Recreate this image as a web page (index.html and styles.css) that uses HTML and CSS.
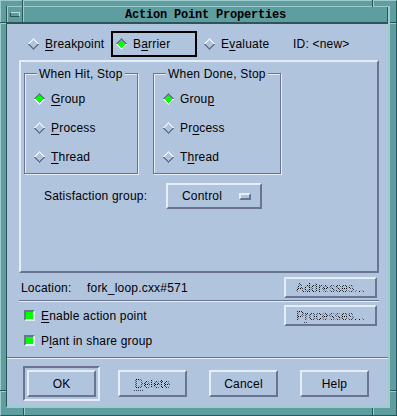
FILE: index.html
```html
<!DOCTYPE html>
<html lang="en">
<head>
    <meta charset="UTF-8">
    <title>Action Point Properties</title>
    <link rel="stylesheet" href="styles.css">
</head>
<body>
    <div class="window">
        <!-- resize handle marks on the frame -->
        <span class="mark v tl"></span>
        <span class="mark v tr"></span>
        <span class="mark h lt"></span>
        <span class="mark h rt"></span>
        <span class="mark h lb"></span>
        <span class="mark h rb"></span>
        <span class="mark v bl"></span>
        <span class="mark v br"></span>

        <div class="frame">
            <div class="titlebar">
                <div class="menu-btn"><span class="menu-glyph"></span></div>
                <div class="title">Action Point Properties</div>
            </div>

            <div class="content">
                <div class="type-row">
                    <div class="toggle">
                        <svg class="radio" viewBox="0 0 12 12" shape-rendering="crispEdges"><polygon class="hi" points="0,6 6,0 12,6 10,6 6,2 2,6"/><polygon class="lo" points="0,6 6,12 12,6 10,6 6,10 2,6"/><polygon class="dot" points="2,6 6,2 10,6 6,10"/></svg>
                        <span><u>B</u>reakpoint</span>
                    </div>
                    <div class="toggle focus">
                        <svg class="radio on" viewBox="0 0 12 12" shape-rendering="crispEdges"><polygon class="hi" points="0,6 6,0 12,6 10,6 6,2 2,6"/><polygon class="lo" points="0,6 6,12 12,6 10,6 6,10 2,6"/><polygon class="dot" points="2,6 6,2 10,6 6,10"/></svg>
                        <span>B<u>a</u>rrier</span>
                    </div>
                    <div class="toggle">
                        <svg class="radio" viewBox="0 0 12 12" shape-rendering="crispEdges"><polygon class="hi" points="0,6 6,0 12,6 10,6 6,2 2,6"/><polygon class="lo" points="0,6 6,12 12,6 10,6 6,10 2,6"/><polygon class="dot" points="2,6 6,2 10,6 6,10"/></svg>
                        <span>E<u>v</u>aluate</span>
                    </div>
                    <span class="id">ID: &lt;new&gt;</span>
                </div>

                <div class="main-frame">
                    <div class="stop-row">
                        <div class="group hit">
                            <span class="group-title">When Hit, Stop</span>
                            <div class="option">
                                <svg class="radio on" viewBox="0 0 12 12" shape-rendering="crispEdges"><polygon class="hi" points="0,6 6,0 12,6 10,6 6,2 2,6"/><polygon class="lo" points="0,6 6,12 12,6 10,6 6,10 2,6"/><polygon class="dot" points="2,6 6,2 10,6 6,10"/></svg>
                                <span><u>G</u>roup</span>
                            </div>
                            <div class="option">
                                <svg class="radio" viewBox="0 0 12 12" shape-rendering="crispEdges"><polygon class="hi" points="0,6 6,0 12,6 10,6 6,2 2,6"/><polygon class="lo" points="0,6 6,12 12,6 10,6 6,10 2,6"/><polygon class="dot" points="2,6 6,2 10,6 6,10"/></svg>
                                <span><u>P</u>rocess</span>
                            </div>
                            <div class="option">
                                <svg class="radio" viewBox="0 0 12 12" shape-rendering="crispEdges"><polygon class="hi" points="0,6 6,0 12,6 10,6 6,2 2,6"/><polygon class="lo" points="0,6 6,12 12,6 10,6 6,10 2,6"/><polygon class="dot" points="2,6 6,2 10,6 6,10"/></svg>
                                <span><u>T</u>hread</span>
                            </div>
                        </div>
                        <div class="group done">
                            <span class="group-title">When Done, Stop</span>
                            <div class="option">
                                <svg class="radio on" viewBox="0 0 12 12" shape-rendering="crispEdges"><polygon class="hi" points="0,6 6,0 12,6 10,6 6,2 2,6"/><polygon class="lo" points="0,6 6,12 12,6 10,6 6,10 2,6"/><polygon class="dot" points="2,6 6,2 10,6 6,10"/></svg>
                                <span>Grou<u>p</u></span>
                            </div>
                            <div class="option">
                                <svg class="radio" viewBox="0 0 12 12" shape-rendering="crispEdges"><polygon class="hi" points="0,6 6,0 12,6 10,6 6,2 2,6"/><polygon class="lo" points="0,6 6,12 12,6 10,6 6,10 2,6"/><polygon class="dot" points="2,6 6,2 10,6 6,10"/></svg>
                                <span>Pr<u>o</u>cess</span>
                            </div>
                            <div class="option">
                                <svg class="radio" viewBox="0 0 12 12" shape-rendering="crispEdges"><polygon class="hi" points="0,6 6,0 12,6 10,6 6,2 2,6"/><polygon class="lo" points="0,6 6,12 12,6 10,6 6,10 2,6"/><polygon class="dot" points="2,6 6,2 10,6 6,10"/></svg>
                                <span>T<u>h</u>read</span>
                            </div>
                        </div>
                    </div>

                    <div class="satisfaction">
                        <span class="sat-label">Satisfaction group:</span>
                        <div class="option-menu">
                            <span>Control</span>
                            <span class="cascade"></span>
                        </div>
                    </div>
                </div>

                <div class="location-row">
                    <span class="loc-label">Location:</span>
                    <span>fork_loop.cxx#571</span>
                    <div class="button side"><span class="insensitive">Addresses...</span></div>
                </div>

                <div class="separator"></div>

                <div class="check-row">
                    <span class="check"></span>
                    <span><u>E</u>nable action point</span>
                    <div class="button side"><span class="insensitive">P<u>r</u>ocesses...</span></div>
                </div>
                <div class="check-row plant">
                    <span class="check"></span>
                    <span>P<u>l</u>ant in share group</span>
                </div>

                <div class="separator full"></div>

                <div class="buttons">
                    <div class="slot default"><div class="button">OK</div></div>
                    <div class="slot"><div class="button"><span class="insensitive"><u>D</u>elete</span></div></div>
                    <div class="slot"><div class="button">Cancel</div></div>
                    <div class="slot"><div class="button">Help</div></div>
                </div>
            </div>
        </div>
    </div>
</body>
</html>
```

FILE: styles.css
```css
body {
    margin: 0;
    padding: 0;
    background: #5f9ea0;
    font-family: 'Liberation Sans', Arial, sans-serif;
    font-size: 12px;
    color: black;
    overflow: hidden;
}

u {
    text-decoration-thickness: 1px;
    text-underline-offset: 2px;
}

/* window manager frame */
.window {
    position: relative;
    box-sizing: border-box;
    width: 397px;
    height: 416px;
    background: #5f9ea0;
    border: 1px solid;
    border-color: #9fcbcc #2b5557 #2b5557 #9fcbcc;
    padding: 5px 6px 7px 5px;
}

.mark {
    position: absolute;
}

.mark.v {
    width: 2px;
    height: 7px;
    background: linear-gradient(to right, #2b5557 50%, #9fcbcc 50%);
}

.mark.h {
    width: 6px;
    height: 2px;
    background: linear-gradient(to bottom, #2b5557 50%, #9fcbcc 50%);
}

.mark.tl { left: 21px; top: -1px; }
.mark.tr { left: 371px; top: -1px; }
.mark.bl { left: 22px; top: 407px; }
.mark.br { left: 371px; top: 407px; }
.mark.lt { left: -1px; top: 21px; }
.mark.rt { left: 389px; top: 21px; }
.mark.lb { left: -1px; top: 389px; }
.mark.rb { left: 389px; top: 389px; }

.frame {
    box-sizing: border-box;
    height: 100%;
    border-style: solid;
    border-width: 0 2px 2px 1px;
    border-color: #2b5557 #9fcbcc #9fcbcc #2b5557;
    display: flex;
    flex-direction: column;
}

.titlebar {
    box-sizing: border-box;
    height: 18px;
    display: flex;
    border-top: 1px solid #9fcbcc;
    border-bottom: 2px solid #2b5557;
}

.menu-btn {
    width: 14px;
    border-left: 1px solid #9fcbcc;
    border-right: 1px solid #2b5557;
    display: flex;
    align-items: center;
    justify-content: center;
}

.menu-glyph {
    width: 8px;
    height: 3px;
    border: 1px solid;
    border-color: #b9dcdc #b9dcdc #2b5557 #2b5557;
}

.title {
    flex: 1;
    border-left: 1px solid #9fcbcc;
    border-right: 1px solid #2b5557;
    text-align: center;
    font-family: 'Liberation Mono', 'Courier New', monospace;
    font-weight: bold;
    font-size: 12px;
    letter-spacing: -0.2px;
    line-height: 16px;
    color: #000;
}

/* dialog body */
.content {
    flex: 1;
    background: #b0c4de;
    display: flex;
    flex-direction: column;
    letter-spacing: 0.2px;
}

.type-row {
    display: flex;
    align-items: center;
    gap: 2px;
    margin: 7px 0 0 16px;
    height: 26px;
}

.toggle {
    box-sizing: border-box;
    width: 86px;
    height: 26px;
    border: 2px solid transparent;
    padding-left: 2px;
    display: flex;
    align-items: center;
    gap: 6px;
}

.toggle.focus {
    border-color: #000;
}

.id {
    margin-left: 6px;
}

.radio {
    width: 12px;
    height: 12px;
    flex: none;
}

.radio .hi { fill: #e6edf6; }
.radio .lo { fill: #6a7490; }
.radio .dot { fill: #b0c4de; }
.radio.on .hi { fill: #6a7490; }
.radio.on .lo { fill: #e6edf6; }
.radio.on .dot { fill: #00ff00; }

.main-frame {
    box-sizing: border-box;
    width: 360px;
    height: 213px;
    margin: 3px 0 0 12px;
    padding: 11px 0 0 3px;
    border: 2px solid;
    border-color: #e6edf6 #6a7490 #6a7490 #e6edf6;
}

.stop-row {
    display: flex;
    gap: 15px;
}

.group {
    position: relative;
    box-sizing: border-box;
    height: 101px;
    padding: 10px 0 0 8px;
    border: 1px solid #6a7490;
    box-shadow: inset 1px 1px 0 #e6edf6, 1px 1px 0 #e6edf6;
}

.group.hit { width: 114px; }
.group.done { width: 128px; }

.group-title {
    position: absolute;
    top: -7px;
    left: 12px;
    padding: 0 2px;
    line-height: 14px;
    background: #b0c4de;
}

.option {
    height: 29px;
    display: flex;
    align-items: center;
    gap: 6px;
}

.satisfaction {
    display: flex;
    align-items: center;
    margin-top: 9px;
    padding-left: 20px;
}

.sat-label {
    width: 122px;
}

.option-menu {
    box-sizing: border-box;
    width: 96px;
    height: 26px;
    padding: 0 9px 0 14px;
    display: flex;
    align-items: center;
    justify-content: space-between;
    border: 2px solid;
    border-color: #e6edf6 #6a7490 #6a7490 #e6edf6;
}

.cascade {
    box-sizing: border-box;
    width: 12px;
    height: 7px;
    border: 2px solid;
    border-color: #e6edf6 #6a7490 #6a7490 #e6edf6;
}

.location-row {
    display: flex;
    align-items: center;
    height: 21px;
    margin-top: 4px;
    padding-left: 14px;
}

.loc-label {
    width: 66px;
}

.button {
    box-sizing: border-box;
    display: flex;
    align-items: center;
    justify-content: center;
    border: 2px solid;
    border-color: #e6edf6 #6a7490 #6a7490 #e6edf6;
}

.button.side {
    width: 93px;
    height: 21px;
    margin: 0 11px 0 auto;
}

.insensitive {
    color: transparent;
    background: repeating-conic-gradient(#000 0 25%, transparent 0 50%) 0 0 / 2px 2px;
    -webkit-background-clip: text;
    background-clip: text;
}

.insensitive u {
    text-decoration-color: #3c4558;
    text-decoration-style: dotted;
}

.separator {
    box-sizing: border-box;
    width: 360px;
    height: 2px;
    margin: 2px 0 0 12px;
    border-top: 1px solid #6a7490;
    border-bottom: 1px solid #e6edf6;
}

.separator.full {
    width: auto;
    margin: 6px 0 0 0;
}

.check-row {
    display: flex;
    align-items: center;
    height: 21px;
    margin-top: 3px;
    padding-left: 17px;
    gap: 6px;
}

.check-row.plant {
    margin-top: 4px;
}

.check {
    box-sizing: border-box;
    width: 11px;
    height: 11px;
    background: #00ff00;
    border: 2px solid;
    border-color: #6a7490 #e6edf6 #e6edf6 #6a7490;
}

.buttons {
    display: flex;
    gap: 14px;
    margin-top: 7px;
    padding-left: 16px;
}

.slot {
    box-sizing: border-box;
    width: 77px;
    height: 35px;
    padding: 2px;
    border: 2px solid transparent;
}

.slot.default {
    border-color: #6a7490 #e6edf6 #e6edf6 #6a7490;
}

.slot .button {
    height: 27px;
}
```
